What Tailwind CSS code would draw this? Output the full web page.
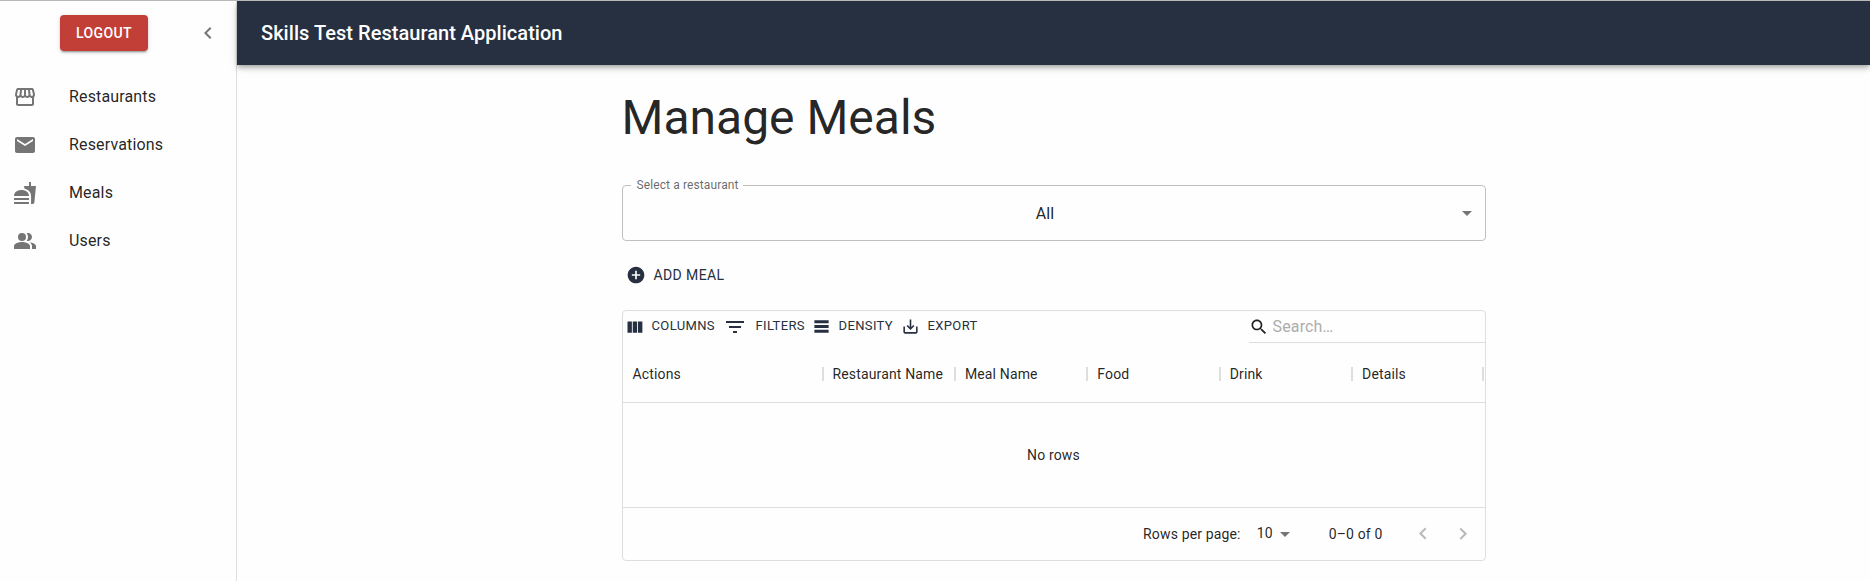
<!DOCTYPE html>
<html lang="en">
<head>
<meta charset="utf-8">
<title>Skills Test Restaurant Application</title>
<script src="https://cdn.jsdelivr.net/npm/@tailwindcss/browser@4"></script>
</head>
<body class="h-[581px] overflow-hidden border-t border-[#b8b8b8] bg-[#fefefe] font-[Roboto,sans-serif] text-base text-black/87">
<div class="flex h-[580px]">
  <aside class="w-[237px] shrink-0 border-r border-[#dedede]">
    <div class="flex h-16 items-start pt-[14px] pl-[60px]">
      <button class="h-9 w-[88px] rounded bg-[#c23f38] pb-px text-sm leading-[26px] font-medium tracking-[0.4px] text-white shadow-[0_3px_1px_-2px_rgba(0,0,0,0.2),0_2px_2px_0_rgba(0,0,0,0.14),0_1px_5px_0_rgba(0,0,0,0.12)]">LOGOUT</button>
      <svg class="mt-[6px] ml-12 size-6 fill-[#757575]" viewBox="0 0 24 24"><path d="M15.41 7.41 14 6l-6 6 6 6 1.41-1.41L10.83 12z"/></svg>
    </div>
    <nav class="pt-2 pl-[13px] tracking-[0.15px] leading-6">
      <a class="flex h-12 items-center gap-8"><svg class="size-6 fill-[#757575]" viewBox="0 0 24 24"><path d="m21.9 8.89-1.05-4.37c-.22-.9-1-1.52-1.91-1.52H5.05c-.9 0-1.69.63-1.9 1.52L2.1 8.89c-.24 1.02-.02 2.06.62 2.88.08.11.19.19.28.29V19c0 1.1.9 2 2 2h14c1.1 0 2-.9 2-2v-6.94c.09-.09.2-.18.28-.28.64-.82.87-1.87.62-2.89zm-2.99-3.9 1.05 4.37c.1.42.01.84-.25 1.17-.14.18-.44.47-.94.47-.61 0-1.14-.49-1.21-1.14L16.98 5l1.93-.01zM13 5h1.96l.54 4.52c.05.39-.07.78-.33 1.07-.22.26-.54.41-.95.41-.67 0-1.22-.59-1.22-1.31V5zM8.49 9.52 9.04 5H11v4.69c0 .72-.55 1.31-1.29 1.31-.34 0-.65-.15-.89-.41-.25-.29-.37-.68-.33-1.07zm-4.45-.16L5.05 5h1.97l-.58 4.86c-.08.65-.6 1.14-1.21 1.14-.49 0-.8-.29-.93-.47-.27-.32-.36-.75-.26-1.17zM5 19v-6.03c.08.01.15.03.23.03.87 0 1.66-.36 2.24-.95.6.6 1.4.95 2.31.95.87 0 1.65-.36 2.23-.93.59.57 1.39.93 2.29.93.84 0 1.64-.35 2.24-.95.58.59 1.37.95 2.24.95.08 0 .15-.02.23-.03V19H5z"/></svg><span>Restaurants</span></a>
      <a class="flex h-12 items-center gap-8"><svg class="size-6 fill-[#757575]" viewBox="0 0 24 24"><path d="M20 4H4c-1.1 0-1.99.9-1.99 2L2 18c0 1.1.9 2 2 2h16c1.1 0 2-.9 2-2V6c0-1.1-.9-2-2-2zm0 4-8 5-8-5V6l8 5 8-5v2z"/></svg><span>Reservations</span></a>
      <a class="flex h-12 items-center gap-8"><svg class="size-6 fill-[#757575]" viewBox="0 0 24 24"><path d="M18.06 22.99h1.66c.84 0 1.53-.64 1.63-1.46L23 5.05h-5V1h-1.97v4.05h-4.97l.3 2.34c1.71.47 3.31 1.32 4.27 2.26 1.44 1.42 2.43 2.89 2.43 5.29v8.05zM1 21.99V21h15.03v.99c0 .55-.45 1-1.01 1H2.01c-.56 0-1.01-.45-1.01-1zm15.03-7c0-8-15.03-8-15.03 0h15.03zM1.02 17h15v2h-15z"/></svg><span>Meals</span></a>
      <a class="flex h-12 items-center gap-8"><svg class="size-6 fill-[#757575]" viewBox="0 0 24 24"><path d="M16.67 13.13C18.04 14.06 19 15.32 19 17v3h4v-3c0-2.18-3.57-3.47-6.33-3.87z"/><circle cx="9" cy="8" r="4"/><path d="M15 12c2.21 0 4-1.79 4-4s-1.79-4-4-4c-.47 0-.91.1-1.33.24C14.5 5.27 15 6.58 15 8s-.5 2.73-1.33 3.76c.42.14.86.24 1.33.24zM9 13c-2.67 0-8 1.34-8 4v3h16v-3c0-2.66-5.33-4-8-4z"/></svg><span>Users</span></a>
    </nav>
  </aside>
  <div class="min-w-0 flex-1">
    <header class="flex h-16 items-center bg-[#263041] pl-6 text-xl leading-8 font-medium tracking-[0.04px] text-white shadow-[0_2px_4px_-1px_rgba(0,0,0,0.2),0_4px_5px_0_rgba(0,0,0,0.14),0_1px_10px_0_rgba(0,0,0,0.12)]"><h1>Skills Test Restaurant Application</h1></header>
    <main class="mx-auto mt-[25px] w-[864px]">
      <h2 class="h-14 text-5xl leading-14">Manage Meals</h2>
      <fieldset class="mt-8 h-[63px] rounded border border-[#c0c0c0] px-2">
        <legend class="h-[14px] pr-[4px] pl-[6px] text-xs leading-[14px] tracking-[0.11px] text-black/60">Select a restaurant</legend>
        <div class="-mr-[2px] flex h-[42px] items-center pl-[5px] leading-6">
          <span class="flex-1 pt-0.5 pr-[24px] text-center tracking-[0.15px]">All</span>
          <svg class="-ml-6 size-6 fill-[#757575]" viewBox="0 0 24 24"><path d="m7 10 5 5 5-5z"/></svg>
        </div>
      </fieldset>
      <button class="mt-[22px] ml-1 flex h-6 items-center gap-2 text-sm tracking-[0.4px] text-[#263041]"><svg class="size-5 fill-current" viewBox="0 0 24 24"><path d="M12 2C6.48 2 2 6.48 2 12s4.48 10 10 10 10-4.48 10-10S17.52 2 12 2zm5 11h-4v4h-2v-4H7v-2h4V7h2v4h4v2z"/></svg><span class="-mt-px">ADD MEAL</span></button>
      <section class="mt-[23px] h-[251px] overflow-hidden rounded border border-[#dedede]">
        <div class="flex h-[35px] items-start justify-between">
          <div class="flex h-[32px] items-center pl-px text-[13px] leading-6 tracking-[0.37px] text-[#263041]">
            <button class="flex w-[99px] items-center"><svg class="mr-[7px] size-[21px] fill-current" viewBox="0 0 24 24"><path d="M10 18h5V5h-5v13zm-6 0h5V5H4v13zM16 5v13h5V5h-5z"/></svg><span class="-mt-0.5">COLUMNS</span></button>
            <button class="flex w-[89px] items-center"><svg class="mr-[9px] size-6 fill-current" viewBox="0 0 24 24"><path d="M10 18h4v-2h-4v2zM3 6v2h18V6H3zm3 7h12v-2H6v2z"/></svg><span class="-mt-0.5">FILTERS</span></button>
            <button class="flex w-[89px] items-center"><svg class="mr-2 mb-px size-[19px] fill-current" viewBox="0 0 24 24"><path d="M21 8H3V4h18v4zm0 2H3v4h18v-4zm0 6H3v4h18v-4z"/></svg><span class="-mt-0.5">DENSITY</span></button>
            <button class="flex items-center"><svg class="mr-2 mb-px size-[19px] fill-current" viewBox="0 0 24 24"><path d="M19 12v7H5v-7H3v7c0 1.1.9 2 2 2h14c1.1 0 2-.9 2-2v-7h-2zm-6 .67 2.59-2.58L17 11.5l-5 5-5-5 1.41-1.41L11 12.67V3h2z"/></svg><span class="-mt-0.5">EXPORT</span></button>
          </div>
          <label class="flex h-8 w-[236px] items-center gap-1 border-b border-[#dedede]"><svg class="size-5 fill-black/87" viewBox="0 0 24 24"><path d="M15.5 14h-.79l-.28-.27C15.41 12.59 16 11.11 16 9.5 16 5.91 13.09 3 9.5 3S3 5.91 3 9.5 5.91 16 9.5 16c1.61 0 3.09-.59 4.23-1.57l.27.28v.79l5 4.99L20.49 19l-4.99-5zm-6 0C7.01 14 5 11.99 5 9.5S7.01 5 9.5 5 14 7.01 14 9.5 11.99 14 9.5 14z"/></svg><span class="tracking-[0.15px] text-[#adadad]">Search…</span></label>
        </div>
        <div class="grid h-[57px] grid-cols-[200px_repeat(5,132.4px)] border-b border-[#dedede] text-sm tracking-[0.15px]">
          <div class="flex items-center justify-between pl-[10px]"><span class="-mt-px">Actions</span><i class="-mr-px h-[14px] w-0.5 bg-[#dedede]"></i></div>
          <div class="flex items-center justify-between pl-[10px]"><span class="-mt-px whitespace-nowrap">Restaurant Name</span><i class="-mr-px h-[14px] w-0.5 bg-[#dedede]"></i></div>
          <div class="flex items-center justify-between pl-[10px]"><span class="-mt-px">Meal Name</span><i class="-mr-px h-[14px] w-0.5 bg-[#dedede]"></i></div>
          <div class="flex items-center justify-between pl-[10px]"><span class="-mt-px">Food</span><i class="-mr-px h-[14px] w-0.5 bg-[#dedede]"></i></div>
          <div class="flex items-center justify-between pl-[10px]"><span class="-mt-px">Drink</span><i class="-mr-px h-[14px] w-0.5 bg-[#dedede]"></i></div>
          <div class="flex items-center justify-between pl-[10px]"><span class="-mt-px">Details</span><i class="h-[14px] w-0.5 bg-[#dedede]"></i></div>
        </div>
        <div class="flex h-[104px] items-center justify-center pb-px text-sm tracking-[0.15px]">No rows</div>
        <div class="flex h-[53px] items-center justify-end border-t border-[#dedede] pr-[10px] text-sm tracking-[0.15px]">
          <span>Rows per page:</span>
          <span class="-mt-0.5 ml-4">10</span>
          <svg class="size-6 fill-[#757575]" viewBox="0 0 24 24"><path d="m7 10 5 5 5-5z"/></svg>
          <span class="ml-8">0–0 of 0</span>
          <svg class="ml-7 size-6 fill-[#b9b9b9]" viewBox="0 0 24 24"><path d="M15.41 16.09l-4.58-4.59 4.58-4.59L14 5.5l-6 6 6 6z"/></svg>
          <svg class="ml-4 size-6 fill-[#b9b9b9]" viewBox="0 0 24 24"><path d="M8.59 16.34l4.58-4.59-4.58-4.59L10 5.75l6 6-6 6z"/></svg>
        </div>
      </section>
    </main>
  </div>
</div>
</body>
</html>
